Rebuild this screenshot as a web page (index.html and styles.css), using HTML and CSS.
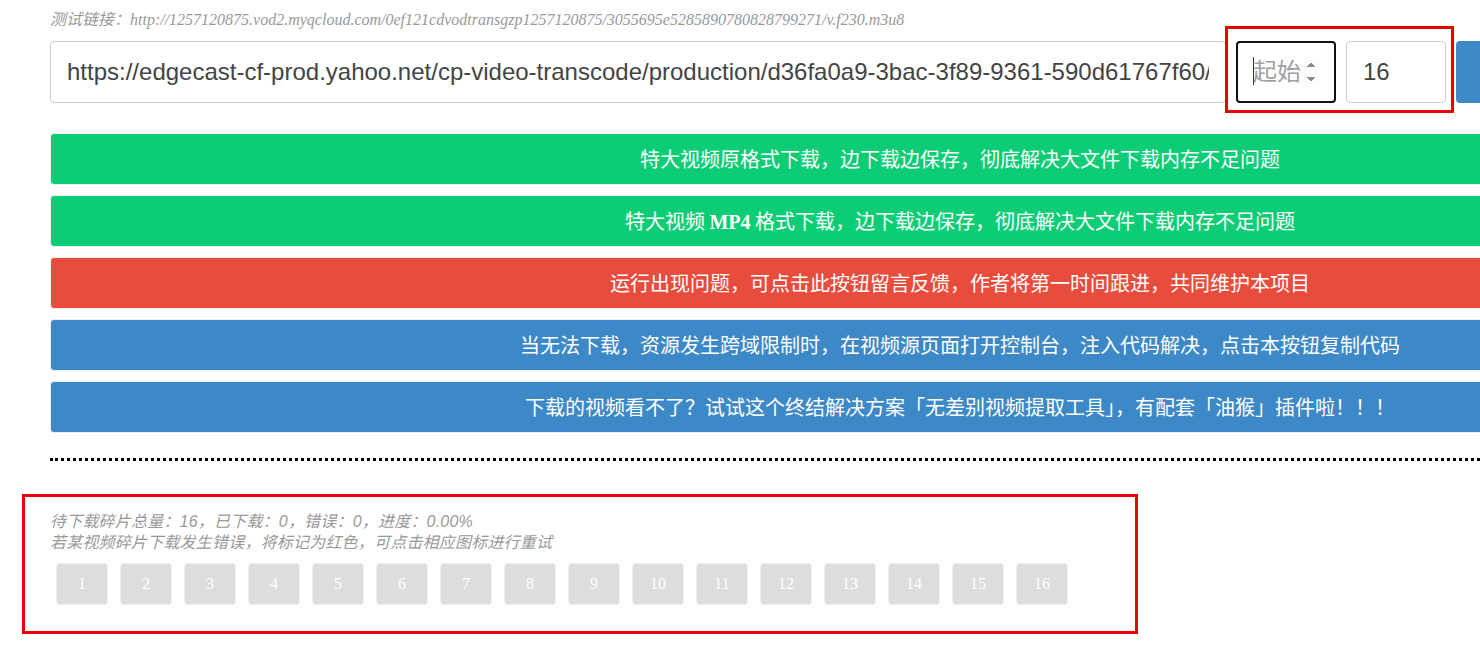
FILE: index.html
```html
<!DOCTYPE html>
<html lang="zh-CN">
<head>
<meta charset="utf-8">
<title>m3u8 downloader</title>
<link rel="stylesheet" href="styles.css">
</head>
<body>
<div class="app">
  <p class="test-link">测试链接：http://1257120875.vod2.myqcloud.com/0ef121cdvodtransgzp1257120875/3055695e5285890780828799271/v.f230.m3u8</p>
  <div class="input-row">
    <input class="url-input" type="text" value="https://edgecast-cf-prod.yahoo.net/cp-video-transcode/production/d36fa0a9-3bac-3f89-9361-590d61767f60/">
    <span class="range-wrap">
      <input class="range-input focused" type="number" placeholder="起始">
      <span class="caret"></span>
    </span>
    <span class="range-wrap">
      <input class="range-input" type="number" value="16">
    </span>
    <div class="action-btn">原格式下载</div>
    <div class="action-btn">转码为MP4下载</div>
  </div>
  <div class="btn green">特大视频原格式下载，边下载边保存，彻底解决大文件下载内存不足问题</div>
  <div class="btn green">特大视频 <b class="mp4">MP4</b> 格式下载，边下载边保存，彻底解决大文件下载内存不足问题</div>
  <div class="btn red">运行出现问题，可点击此按钮留言反馈，作者将第一时间跟进，共同维护本项目</div>
  <div class="btn blue">当无法下载，资源发生跨域限制时，在视频源页面打开控制台，注入代码解决，点击本按钮复制代码</div>
  <div class="btn blue">下载的视频看不了？试试这个终结解决方案「无差别视频提取工具」，有配套「油猴」插件啦！！！</div>
  <div class="line"></div>
  <div class="tips">
    <div>待下载碎片总量：16，已下载：0，错误：0，进度：0.00%</div>
    <div>若某视频碎片下载发生错误，将标记为红色，可点击相应图标进行重试</div>
  </div>
  <div class="segments">
    <span class="item">1</span><span class="item">2</span><span class="item">3</span><span class="item">4</span><span class="item">5</span><span class="item">6</span><span class="item">7</span><span class="item">8</span><span class="item">9</span><span class="item">10</span><span class="item">11</span><span class="item">12</span><span class="item">13</span><span class="item">14</span><span class="item">15</span><span class="item">16</span>
  </div>
</div>
<div class="mark mark-top"></div>
<div class="mark mark-bottom"></div>
</body>
</html>
```
FILE: styles.css
```css
html {
  overflow: hidden;
}
body {
  margin: 0;
  padding: 0;
  background: #fff;
  font-family: "Noto Sans CJK SC", sans-serif;
  position: relative;
}
.app {
  width: 1920px;
  box-sizing: border-box;
  padding: 10px 50px 80px;
  text-align: center;
}
.test-link {
  margin: 0;
  text-align: left;
  font-family: "Liberation Serif", "Noto Sans CJK SC", serif;
  font-style: italic;
  font-size: 16px;
  line-height: 20px;
  color: #999;
}
.input-row {
  display: flex;
  margin-top: 11px;
  margin-bottom: 30px;
}
.url-input {
  flex: 1;
  min-width: 0;
  padding: 16px;
  font-family: "Liberation Sans", Arial, sans-serif;
  font-size: 24px;
  line-height: 28px;
  height: 62px;
  box-sizing: border-box;
  color: #444;
  border: 1px solid #ccc;
  border-radius: 4px;
  outline: none;
  margin: 0;
}
.range-wrap {
  position: relative;
  flex: 0 0 100px;
  margin-left: 10px;
  display: flex;
}
.range-input {
  width: 100px;
  height: 62px;
  box-sizing: border-box;
  padding: 16px;
  margin: 0;
  font-family: "Liberation Sans", "Noto Sans CJK SC", sans-serif;
  font-size: 24px;
  line-height: 28px;
  color: #444;
  border: 1px solid #ccc;
  border-radius: 4px;
  outline: none;
}
.range-input::placeholder {
  color: #a0a0a0;
}
.range-input.focused {
  border: 2px solid #101010;
  padding: 15px;
}
.range-input.focused::-webkit-inner-spin-button {
  opacity: 1;
}
.caret {
  position: absolute;
  left: 17px;
  top: 16px;
  width: 1px;
  height: 28px;
  background: #333;
}
.action-btn {
  flex: 0 0 202px;
  margin-left: 10px;
  height: 62px;
  line-height: 62px;
  font-size: 24px;
  color: #fff;
  border-radius: 4px;
  background: #3d8ac7;
}
.btn {
  height: 50px;
  line-height: 50px;
  margin-top: 10px;
  font-size: 20px;
  color: #fff;
  border-radius: 4px;
  border: 1px solid #eee;
}
.input-row + .btn {
  margin-top: 0;
}
.green { background: #0ccd76; }
.red { background: #e74c3c; }
.blue { background: #3d88c6; }
.mp4 {
  font-family: "Liberation Serif", serif;
  font-weight: bold;
}
.line {
  margin: 20px 0 50px;
  height: 5px;
  border-bottom: 3px dotted #000;
}
.tips {
  text-align: left;
  font-size: 16px;
  letter-spacing: 0.2px;
  line-height: 21px;
  font-style: italic;
  color: #999;
  font-family: "Liberation Sans", "Noto Sans CJK SC", sans-serif;
}
.segments {
  text-align: left;
  font-size: 0;
}
.item {
  display: inline-block;
  margin: 10px 6px;
  width: 50px;
  height: 40px;
  line-height: 40px;
  text-align: center;
  color: #fff;
  font-family: "Liberation Serif", serif;
  font-size: 16px;
  border-radius: 4px;
  border: 1px solid #eee;
  background: #ddd;
  vertical-align: top;
}
.mark {
  position: absolute;
  border: 3px solid #e00;
  box-sizing: border-box;
  pointer-events: none;
}
.mark-top {
  left: 1225px;
  top: 26px;
  width: 229px;
  height: 87px;
}
.mark-bottom {
  left: 22px;
  top: 494px;
  width: 1116px;
  height: 140px;
}
```
